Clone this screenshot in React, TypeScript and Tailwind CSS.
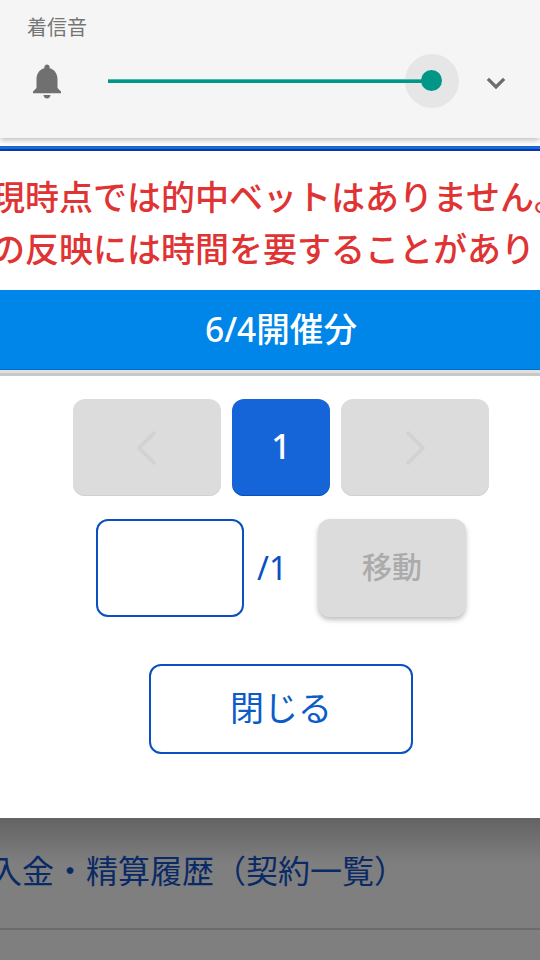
const jp = "font-['Noto_Sans','Noto_Sans_CJK_JP',sans-serif]";

function Chevron({ dir }: { dir: "left" | "right" }) {
  return (
    <svg width="22" height="36" viewBox="0 0 22 36" fill="none" stroke="#d2d2d2" strokeWidth="3.5">
      <polyline points={dir === "left" ? "19,2 3,18 19,34" : "3,2 19,18 3,34"} />
    </svg>
  );
}

export default function App() {
  return (
    <div className={`${jp} relative flex h-[960px] w-[540px] flex-col overflow-hidden bg-white`}>
      {/* Notification volume panel */}
      <div className="z-10 flex h-[138px] shrink-0 flex-col bg-[#f5f5f5] pl-[27px] pr-[23px] pt-[16px] shadow-[0_2px_6px_rgba(0,0,0,0.28)]">
        <div className="h-[24px] text-[20px] leading-[24px] text-[#757575]">着信音</div>
        <div className="mt-[14px] flex h-[54px] items-center">
          <svg width="42" height="42" viewBox="0 0 24 24" fill="#707070" className="-ml-[1px] mr-[40px] shrink-0">
            <path d="M12 22c1.1 0 2-.9 2-2h-4c0 1.1.89 2 2 2zm6-6v-5c0-3.07-1.64-5.64-4.5-6.32V4c0-.83-.67-1.5-1.5-1.5s-1.5.67-1.5 1.5v.68C7.63 5.36 6 7.92 6 11v5l-2 2v1h16v-1l-2-2z" />
          </svg>
          <div className="relative -mt-[1px] h-[4px] w-[324px] shrink-0">
            <div className="absolute -right-[27px] -top-[25px] h-[54px] w-[54px] rounded-full bg-[#e6e6e6]" />
            <div className="absolute inset-0 border-t border-[#4db6ac] bg-[#009688]" />
            <div className="absolute -right-[10px] -top-[9px] h-[21px] w-[21px] rounded-full bg-[#009688]" />
          </div>
          <svg width="36" height="36" viewBox="0 0 24 24" fill="none" stroke="#6e6e6e" strokeWidth="2.2" className="ml-[46px] mt-[4px] shrink-0">
            <polyline points="6.6,9.2 12,14.6 17.4,9.2" />
          </svg>
        </div>
      </div>

      {/* Modal */}
      <div className="mt-[8px] flex h-[672px] shrink-0 flex-col bg-white">
        <div className="h-[3px] shrink-0 bg-[#1a68d8]" />
        <div className="h-[2px] shrink-0 bg-[#0a38a8]" />
        <div className="flex h-[139px] shrink-0 flex-col overflow-hidden pt-[21px] text-[34px] font-medium leading-[52px] text-[#e03333]">
          <div className="-ml-[9px] -mt-[1px] whitespace-nowrap">現時点では的中ベットはありません。</div>
          <div className="-ml-[9px] whitespace-nowrap">の反映には時間を要することがあります</div>
        </div>
        <div className="flex h-[80px] shrink-0 items-center justify-center bg-[#0085e8] pb-[2px] pl-[22px] text-[33.6px] font-medium leading-[40px] text-white shadow-[inset_0_-1px_0_#0070cc]">
          6/4開催分
        </div>
        <div className="h-[6px] shrink-0 border-b-[3px] border-[#c8c8c8] bg-[#e0e0e0]" />

        <div className="mt-[23px] flex justify-center gap-[11px] pl-[22px]">
          <button className="flex h-[97px] w-[148px] items-center justify-center rounded-[12px] bg-[#dcdcdc] shadow-[inset_0_-1px_0_#d0d0d0]">
            <Chevron dir="left" />
          </button>
          <button className="flex h-[97px] w-[98px] items-center justify-center rounded-[12px] bg-[#1565d8] pb-[4px] text-[34px] font-medium leading-[40px] text-white shadow-[inset_0_-1px_0_#0d4fb8]">
            1
          </button>
          <button className="flex h-[97px] w-[148px] items-center justify-center rounded-[12px] bg-[#dcdcdc] shadow-[inset_0_-1px_0_#d0d0d0]">
            <Chevron dir="right" />
          </button>
        </div>

        <div className="ml-[96px] mt-[23px] flex items-center">
          <div className="h-[98px] w-[148px] rounded-[12px] border-2 border-[#0a50c0] bg-white" />
          <span className="ml-[13px] w-[61px] text-[32px] leading-[40px] text-[#0a50c0]">/1</span>
          <button className="flex h-[98px] w-[148px] items-center justify-center rounded-[12px] bg-[#dcdcdc] pb-[2px] text-[30px] font-medium leading-[40px] text-[#ababab] shadow-[0_3px_5px_rgba(0,0,0,0.25)]">
            移動
          </button>
        </div>

        <div className="mt-[47px] flex justify-center pl-[22px]">
          <button className="flex h-[90px] w-[264px] items-center justify-center rounded-[12px] border-2 border-[#0a50c0] bg-white pb-[2px] text-[34px] leading-[40px] text-[#0a5cc8]">
            閉じる
          </button>
        </div>
      </div>

      {/* Dimmed page behind */}
      <div className="flex min-h-0 flex-1 flex-col bg-gradient-to-b from-[#636363] to-[#7f7f7f] to-[32%]">
        <div className="flex h-[112px] shrink-0 items-center border-b-[2px] border-[#6c6c6c] pb-[4px]">
          <span className="-ml-[10px] whitespace-nowrap text-[32px] leading-[40px] text-[#0a2a66]">入金・精算履歴（契約一覧）</span>
        </div>
      </div>
    </div>
  );
}
